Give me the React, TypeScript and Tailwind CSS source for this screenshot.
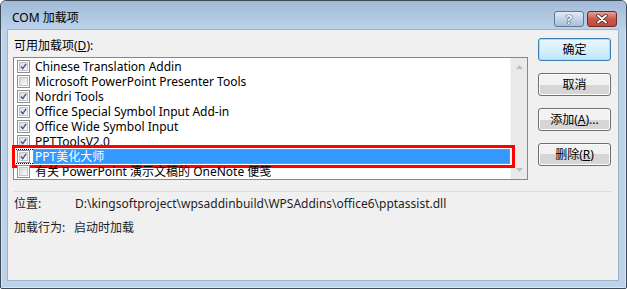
import React from "react";

type Item = { label: string; checked: boolean; selected?: boolean };

const items: Item[] = [
  { label: "Chinese Translation Addin", checked: true },
  { label: "Microsoft PowerPoint Presenter Tools", checked: false },
  { label: "Nordri Tools", checked: true },
  { label: "Office Special Symbol Input Add-in", checked: true },
  { label: "Office Wide Symbol Input", checked: true },
  { label: "PPTToolsV2.0", checked: true },
  { label: "PPT美化大师", checked: true, selected: true },
  { label: "有关 PowerPoint 演示文稿的 OneNote 便笺", checked: false },
];

const CheckBox: React.FC<{ checked: boolean }> = ({ checked }) => (
  <span className="flex h-[13px] w-[13px] shrink-0 items-center justify-center border border-[#8e8f8f] bg-white p-px">
    <span className="flex h-full w-full items-center justify-center border border-[#c4c4c4] bg-linear-to-br from-[#d8d8d8] to-[#fbfbfb]">
      {checked && (
        <svg width="9" height="9" viewBox="0 0 9 9">
          <path d="M1.2 4.4 L3.6 7.2 L7.8 1.2" fill="none" stroke="#3e569a" strokeWidth="1.8" />
        </svg>
      )}
    </span>
  </span>
);

const Button: React.FC<{ children: React.ReactNode; primary?: boolean }> = ({ children, primary }) => (
  <button
    className={
      primary
        ? "h-[23px] w-[73px] rounded-[3px] border border-[#3c7fb1] bg-linear-to-b from-[#eaf6fd] via-[#d9f0fc] to-[#bee6fd] text-[12px] leading-[21px] text-black shadow-[inset_0_0_0_1px_#a6dcf6]"
        : "h-[23px] w-[73px] rounded-[3px] border border-[#707070] bg-linear-to-b from-[#f2f2f2] from-50% to-[#d6d6d6] to-50% text-[12px] leading-[21px] text-black shadow-[inset_0_0_0_1px_#fcfcfc]"
    }
  >
    {children}
  </button>
);

export default function App() {
  return (
    <div className="h-[289px] w-[627px] bg-white font-['Segoe_UI','Noto_Sans','Noto_Sans_CJK_SC',sans-serif] text-[12px] text-black">
      <div className="flex h-[289px] w-[627px] flex-col rounded-t-[6px] rounded-b-[2px] border border-[#3d4a58] bg-[#bcd3ea] shadow-[inset_0_0_0_1px_rgba(255,255,255,0.45)]">
        {/* title bar */}
        <div className="flex h-[29px] items-center rounded-t-[6px] bg-linear-to-b from-[#a2bad6] to-[#bcd3eb] pl-[11px] pr-[9px]">
          <span className="pt-[5px] leading-[16px]">COM 加载项</span>
          <div className="ml-auto flex gap-[3px] self-start pt-[10px]">
            <div className="flex h-[16px] w-[30px] items-center justify-center rounded-[3px] border border-[#5e7594] bg-linear-to-b from-[#e3ebf4] via-[#c3d3e6] to-[#a9c0dc]">
              <span className="text-[13px] font-bold leading-[14px] text-white [text-shadow:0_0_1px_#2a3b52,0_0_1px_#2a3b52,0_0_1px_#2a3b52]">?</span>
            </div>
            <div className="flex h-[16px] w-[30px] items-center justify-center rounded-[3px] border border-[#6b2b25] bg-linear-to-b from-[#e7a198] via-[#c8574b] to-[#c44a3c]">
              <svg width="12" height="10" viewBox="0 0 12 10">
                <path d="M2 1.5 L10 8.5 M10 1.5 L2 8.5" stroke="#3a1a16" strokeWidth="3.4" strokeLinecap="round" />
                <path d="M2 1.5 L10 8.5 M10 1.5 L2 8.5" stroke="#ffffff" strokeWidth="2" strokeLinecap="round" />
              </svg>
            </div>
          </div>
        </div>

        {/* client area */}
        <div className="mb-[8px] ml-[7px] mr-[8px] flex flex-1 flex-col bg-[#f0f0f0] shadow-[0_0_0_1px_#9db4cd]">
          <div className="flex gap-[10px] pl-[5px] pt-[8px]">
            <div className="flex w-[515px] flex-col">
              <div className="h-[16px] pl-px leading-[16px]">
                可用加载项(<span className="underline">D</span>):
              </div>
              <div className="mt-[3px] flex h-[123px] border border-[#828790] bg-white">
                <div className="flex flex-1 flex-col pt-px">
                  {items.map((it) => (
                    <div key={it.label} className="relative flex h-[15px] items-center">
                      {it.selected ? (
                        <>
                          <div className="flex h-[15px] items-center border-y border-l border-dotted border-black pl-[2px] pr-[3px]">
                            <CheckBox checked={it.checked} />
                          </div>
                          <div className="flex h-[15px] flex-1 items-center border border-dotted border-[#e08a3c] bg-[#3399ff] pl-[1px] leading-[13px] text-white">
                            {it.label}
                          </div>
                          <div className="pointer-events-none absolute left-[-2px] top-[-4px] h-[23px] w-[503px] border-[3px] border-[#ff0000]" />
                        </>
                      ) : (
                        <>
                          <div className="flex h-[15px] items-center pl-[3px] pr-[3px]">
                            <CheckBox checked={it.checked} />
                          </div>
                          <div className="pl-[2px] leading-[15px]">{it.label}</div>
                        </>
                      )}
                    </div>
                  ))}
                </div>
                <div className="flex w-[17px] flex-col items-center justify-between border-l border-[#f4f4f4] bg-[#eaeaea] py-[7px]">
                  <svg width="7" height="4" viewBox="0 0 7 4">
                    <path d="M0 4 L3.5 0 L7 4 Z" fill="#bdbdbd" />
                  </svg>
                  <svg width="7" height="4" viewBox="0 0 7 4">
                    <path d="M0 0 L3.5 4 L7 0 Z" fill="#bdbdbd" />
                  </svg>
                </div>
              </div>
            </div>

            <div className="flex flex-col gap-[12px]">
              <Button primary>确定</Button>
              <Button>取消</Button>
              <Button>
                添加(<span className="underline">A</span>)...
              </Button>
              <Button>
                删除(<span className="underline">R</span>)
              </Button>
            </div>
          </div>

          <div className="mx-[6px] mt-[11px] h-px bg-[#d5dde5]" />

          <div className="mt-[4px] flex h-[16px] items-center pl-[6px] leading-[16px] text-[#1e1e1e]">
            <span className="w-[61px]">位置:</span>
            <span>D:\kingsoftproject\wpsaddinbuild\WPSAddins\office6\pptassist.dll</span>
          </div>
          <div className="mt-[8px] flex h-[16px] items-center pl-[6px] leading-[16px] text-[#1e1e1e]">
            <span className="w-[60px]">加载行为:</span>
            <span>启动时加载</span>
          </div>
        </div>
      </div>
    </div>
  );
}
